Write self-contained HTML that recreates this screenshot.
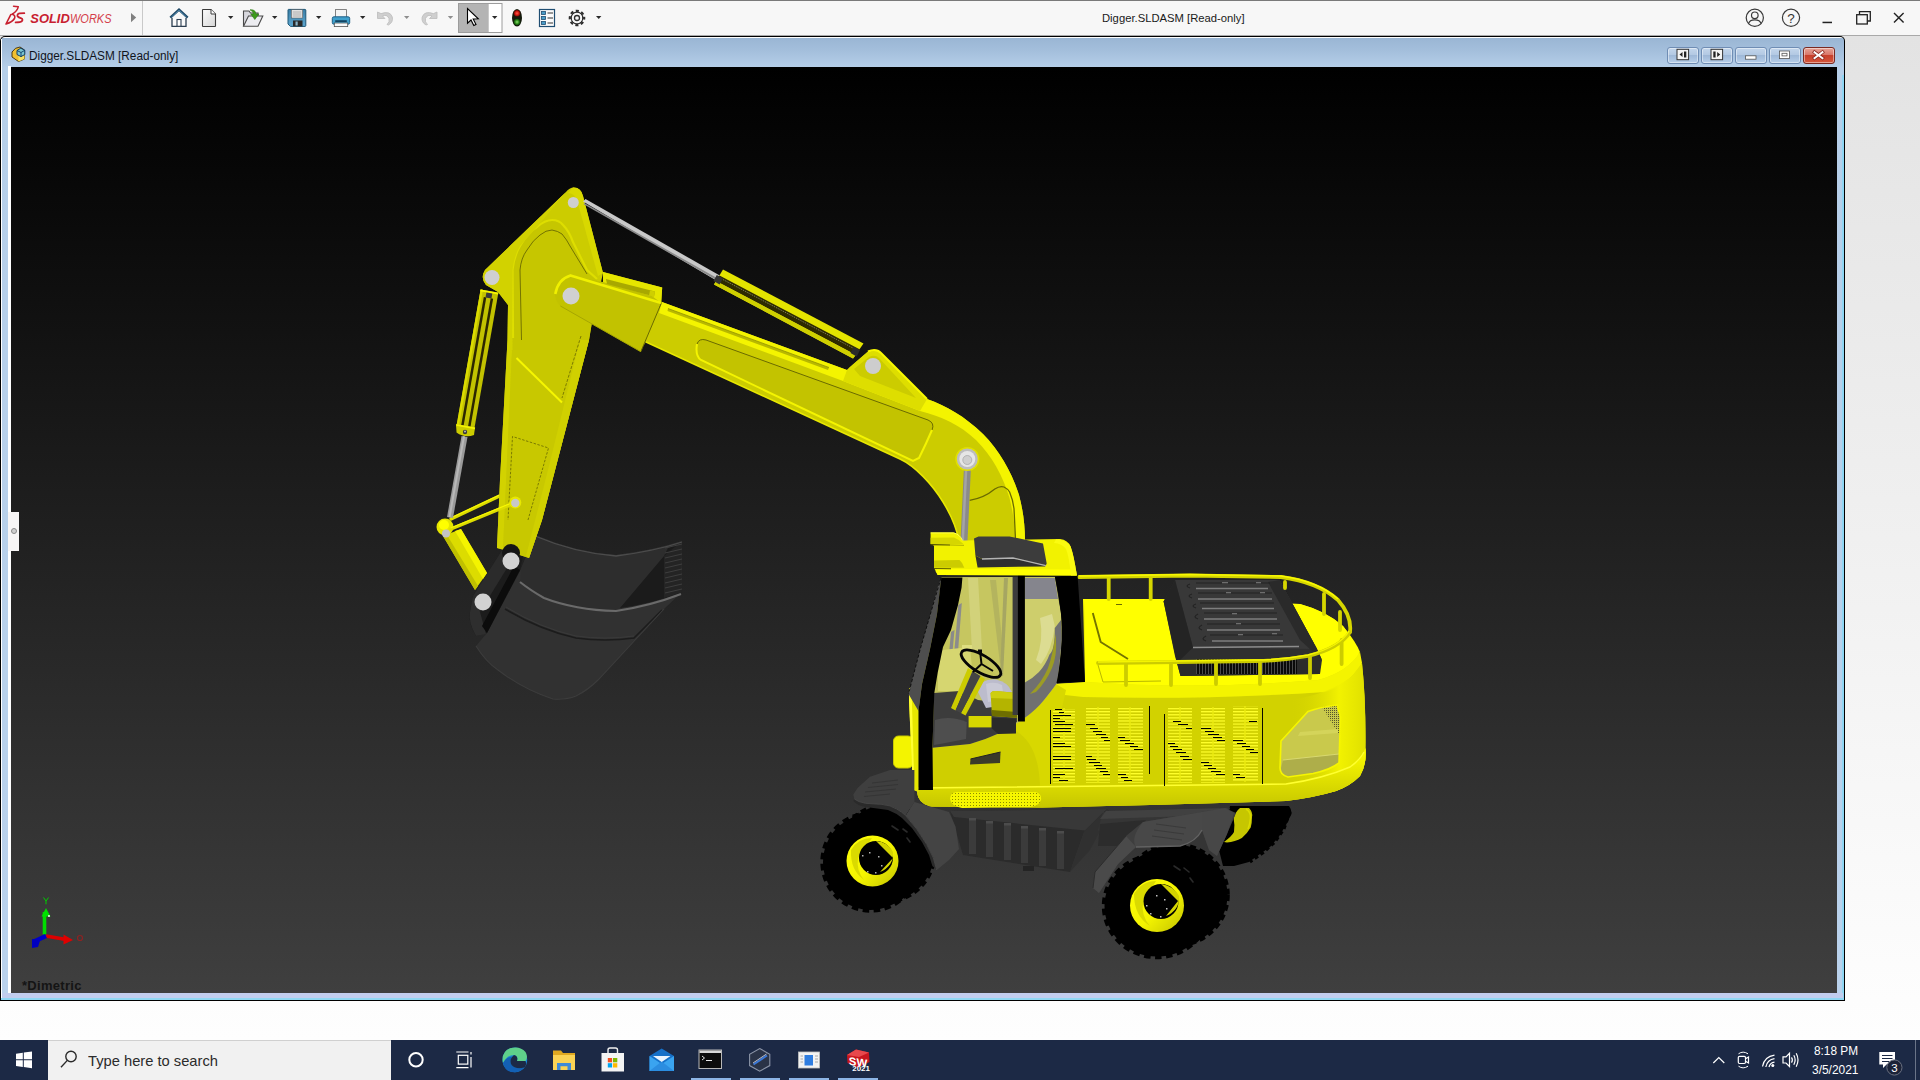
<!DOCTYPE html>
<html>
<head>
<meta charset="utf-8">
<title>Digger.SLDASM</title>
<style>
*{margin:0;padding:0;box-sizing:border-box}
html,body{width:1920px;height:1080px;overflow:hidden;background:#fdfdfd;font-family:"Liberation Sans",sans-serif}
#root{position:relative;width:1920px;height:1080px;overflow:hidden;background:#fdfdfd}
#swbg{position:absolute;left:0;top:36px;width:1920px;height:1004px;background:linear-gradient(#e3e3e3 0,#f0f0f0 50%,#fdfdfd 96%,#fefefe 100%)}
#topbar{position:absolute;left:0;top:0;width:1920px;height:36px;background:#f7f7f7;border-top:1px solid #7a7a7a}
#topsep{position:absolute;left:142px;top:1px;width:1px;height:34px;background:#c9c9c9}
#topline{position:absolute;left:0;top:35px;width:1920px;height:1px;background:#a9a9a9}
#apptitle{position:absolute;left:1101.5px;top:11px;font-size:11.5px;transform:scaleX(.978);line-height:15px;color:#1a1a1a;white-space:nowrap;transform-origin:0 50%}
#mdi{position:absolute;left:0;top:36px;width:1845px;height:965px;background:#000;border-radius:5px 5px 0 0}
#mdi-in{position:absolute;left:1px;top:1px;right:1px;bottom:1px;border-radius:4px 4px 0 0;background:linear-gradient(#fff 0,#fff 1px,#9ab6d4 1px,#a4bfdc 14px,#b6cfe9 31px,#bad2ec 100%)}
#mdi-in:before{content:"";position:absolute;left:0;top:2px;bottom:0;width:1px;background:#fff}
#mdi-in:after{content:"";position:absolute;left:0;right:0;bottom:0;height:2px;background:#8fd6f3}
#mdi-r{position:absolute;right:1px;top:39px;bottom:1px;width:2px;background:#8fd6f3}
#vpframe{position:absolute;left:8px;top:66px;width:3px;height:927px;background:#fff}
#botband{position:absolute;left:2px;top:993px;width:1841px;height:5px;background:#c2cdee}
#viewport{position:absolute;left:11px;top:67px;width:1826px;height:926px;background:linear-gradient(#000 0,#3f3f3f 100%)}
#mdititle{position:absolute;left:28.8px;top:48.6px;font-size:12px;transform:scaleX(.982);line-height:15px;color:#10141c;white-space:nowrap;transform-origin:0 50%}
.wb{position:absolute;top:46.6px;width:32px;height:17px;border:1px solid #6f8db4;border-radius:3px;background:linear-gradient(#c3d6ec 0,#b3c9e3 45%,#9fb9d8 50%,#b7cfea 100%);box-shadow:inset 0 0 0 1px rgba(255,255,255,.45)}
.wb.cl{border-color:#7a2a22;background:linear-gradient(#e6a497 0,#d9776a 45%,#c8402c 50%,#d4573c 100%)}
#handle{position:absolute;left:8px;top:512px;width:11px;height:39px;background:#f7f5f5}
#handle i{position:absolute;left:3px;top:16px;width:6px;height:6px;border:1px solid #8a8a8a;border-radius:50%;background:#cfcfcf}
#dimetric{position:absolute;left:22px;top:977.8px;font-size:13px;font-weight:bold;color:#141414;letter-spacing:.3px;line-height:15px}
#gap{display:none}
#taskbar{position:absolute;left:0;top:1040px;width:1920px;height:40px;background:#1c2945}
#search{position:absolute;left:48px;top:0;width:343px;height:40px;background:#f1f1f1;border-top:1px solid #d0d0d0}
#search span{position:absolute;left:40px;top:11px;font-size:15px;transform:scaleX(.98);color:#2b2b2b;white-space:nowrap;line-height:18px;transform-origin:0 50%}
.ul{position:absolute;top:38px;height:2px;background:#8db5e6}
.tray{position:absolute;color:#fff;font-size:12px;line-height:14px;white-space:nowrap;transform-origin:0 50%}
svg{position:absolute;left:0;top:0;overflow:visible}
</style>
</head>
<body>
<div id="root">
<div id="swbg"></div>
<div id="topbar"></div>
<div id="topsep"></div>
<div id="topline"></div>
<div id="apptitle">Digger.SLDASM [Read-only]</div>

<div id="mdi"><div id="mdi-in"></div><div id="mdi-r"></div></div>
<div id="vpframe"></div><div id="botband"></div>
<div id="viewport"></div>
<div id="mdititle">Digger.SLDASM [Read-only]</div>
<div class="wb" style="left:1667px"></div>
<div class="wb" style="left:1701px"></div>
<div class="wb" style="left:1735px"></div>
<div class="wb" style="left:1769px"></div>
<div class="wb cl" style="left:1803px"></div>
<div id="handle"><i></i></div>
<div id="dimetric">*Dimetric</div>

<div id="gap"></div>
<div id="taskbar">
<div id="search"><span>Type here to search</span></div>
<div class="ul" style="left:691px;width:40px"></div>
<div class="ul" style="left:740px;width:40px"></div>
<div class="ul" style="left:789px;width:40px"></div>
<div class="ul" style="left:838px;width:40px"></div>
</div>
<div class="tray" id="time" style="left:1814px;top:1044.3px;transform:scaleX(.985)">8:18 PM</div>
<div class="tray" id="date" style="left:1811.5px;top:1062.5px;transform:scaleX(.995)">3/5/2021</div>

<svg width="1920" height="1080" viewBox="0 0 1920 1080" shape-rendering="auto">
<defs>
<clipPath id="vp"><rect x="11" y="67" width="1826" height="926"/></clipPath>
<linearGradient id="gRim" x1="0" y1="0" x2="1" y2="1"><stop offset="0" stop-color="#ffff0a"/><stop offset=".55" stop-color="#f4f400"/><stop offset="1" stop-color="#c2c200"/></linearGradient>
<linearGradient id="gBoom" x1="0" y1="0" x2="0" y2="1"><stop offset="0" stop-color="#dede00"/><stop offset="1" stop-color="#cfcf00"/></linearGradient>
<linearGradient id="gSide" x1="0" y1="0" x2="0" y2="1"><stop offset="0" stop-color="#ffff00"/><stop offset=".18" stop-color="#ecec00"/><stop offset=".35" stop-color="#dcdc00"/><stop offset="1" stop-color="#d6d600"/></linearGradient>
<linearGradient id="gSill" x1="0" y1="0" x2="0" y2="1"><stop offset="0" stop-color="#ffff00"/><stop offset=".35" stop-color="#eaea00"/><stop offset="1" stop-color="#c6c600"/></linearGradient>
<linearGradient id="gRear" x1="0" y1="0" x2="1" y2="0"><stop offset="0" stop-color="#d2d200" stop-opacity="0"/><stop offset=".65" stop-color="#f2f200"/><stop offset="1" stop-color="#e0e000"/></linearGradient>
<linearGradient id="gGlass" x1="0" y1="0" x2="1" y2="0"><stop offset="0" stop-color="#b9b950"/><stop offset=".5" stop-color="#b4b44a"/><stop offset="1" stop-color="#a6a64e"/></linearGradient>
<linearGradient id="gRod" x1="0" y1="0" x2="0" y2="1"><stop offset="0" stop-color="#d6d6d6"/><stop offset="1" stop-color="#8e8e8e"/></linearGradient>
<pattern id="pSlat" x="0" y="708" width="4" height="3.1" patternUnits="userSpaceOnUse"><rect width="4" height="3.1" fill="#d0d000"/><rect width="4" height="1.2" fill="#ffff2a"/></pattern>
<pattern id="pVent" x="1196" y="0" width="3" height="4" patternUnits="userSpaceOnUse"><rect width="3" height="4" fill="#0a0a0a"/><rect width="1" height="4" fill="#4a4a4a"/></pattern>
<pattern id="pDots" x="0" y="0" width="3" height="3" patternUnits="userSpaceOnUse"><rect width="3" height="3" fill="#f6f600"/><rect width="1" height="1" x="1" y="1" fill="#8c8c00"/></pattern>
<pattern id="pHatch" x="0" y="0" width="2" height="2" patternUnits="userSpaceOnUse"><rect width="2" height="2" fill="#c8c84a"/><rect width="1" height="1" fill="#55552a"/></pattern>
</defs>
<g clip-path="url(#vp)">
<!-- ===== bucket ===== -->
<g id="bucket">
<!-- outer shell -->
<path d="M476,646 Q486,662 498,670 Q524,690 553,699 Q566,700 576,696 Q588,690 598,680 L637,638 L664,609 L681,593 L682,541 Q655,550 616,555 Q575,552 535,535 L521,569 L487,633Z" fill="#313131"/>
<!-- inside back wall -->
<path d="M535,535 Q575,552 616,555 Q655,550 682,541 L681,593 Q650,606 616,611 Q575,610 544,598 Q530,590 520,582 L521,569Z" fill="#2d2d2d"/>
<path d="M620,608 L664,556 L668,548 L681,543 L681,593 Q650,604 620,608Z" fill="#1b1b1b"/>
<path d="M664,556 L682,541 L681,593 L664,598Z" fill="#242424"/>
<g stroke="#3e3e3e" stroke-width="1"><path d="M665,548 L682,544 M665,553 L682,549 M665,558 L682,554 M665,563 L682,559 M665,568 L682,564 M665,573 L682,569 M665,578 L682,574 M665,583 L682,579 M665,588 L682,584 M665,593 L682,589"/></g>
<!-- rim highlight -->
<path d="M520,582 Q530,590 544,598 Q575,610 616,611 Q650,606 681,594" fill="none" stroke="#6a6a6a" stroke-width="2.1"/>
<path d="M535,536 Q575,553 616,556 Q655,551 682,542" fill="none" stroke="#4c4c4c" stroke-width="1.3"/>
<!-- band -->
<path d="M505,609 Q540,630 576,638 Q605,642 634,638 L662,610" fill="none" stroke="#1c1c1c" stroke-width="1.6"/>
<path d="M506,607 Q540,628 576,636 Q605,640 634,636" fill="none" stroke="#3a3a3a" stroke-width="1"/>
<path d="M476,646 Q486,662 498,670 Q524,690 553,699 Q566,700 576,696 Q588,690 598,680 L637,638 L664,609" fill="none" stroke="#3c3c3c" stroke-width="1.1"/>
<!-- bracket -->
<path d="M504,547 Q509,542 516,544 Q524,548 523,556 L520,570 L487,633 L476,636 Q468,622 470,612 L473,596Z" fill="#1c1c1c"/>
<path d="M504,547 L512,560 L480,612 L473,596Z" fill="#2b2b2b"/>
<path d="M473,596 L480,612 L486,634 L476,636 Q468,622 470,612Z" fill="#2e2e2e"/>
<path d="M520,570 L487,633 L482,626 L514,566Z" fill="#0c0c0c"/>
</g>
<!-- ===== linkage ===== -->
<g id="link">
<path d="M443,536 L461,529 L487,573 L475,590Z" fill="#dcdc00"/>
<path d="M455,531 L461,529 L487,573 L483,579Z" fill="#f4f400"/>
<path d="M443,536 L447,535 L478,586 L475,590Z" fill="#c0c000"/>
<path d="M451,519 L499.5,496" stroke="#dcdc00" stroke-width="3.4" stroke-linecap="round"/>
<path d="M450.6,518 L499,495.2" stroke="#f8f800" stroke-width="1.1"/>
<circle cx="445" cy="527" r="8.5" fill="#e6e600"/>
<circle cx="444" cy="525" r="5" fill="#ffff00"/>
<circle cx="446" cy="533.5" r="4" fill="#c4c4c4"/>
</g>
<!-- ===== stick ===== -->
<g id="stick">
<path d="M573,187.5 Q581,187 583,196 L603,273 L592,322 L589,340 L542,520 L529,558 L497,548 L500,480 L507.5,340 L508,305 L498,292 L486,285 Q480,278 485,270 L566,192 Q569,188 573,187.5Z" fill="#cccc00"/>
<!-- right side highlight of upper flange -->
<path d="M573,187.5 Q581,187 583,196 L603,273 L598,276 L577,200 Q574,193 568,193Z" fill="#d8d800"/>
<!-- inner raised panel -->
<path d="M513,350 L512.5,270 Q514,256 520,246 Q528,232 537,227 Q545,220 552,220 Q559,220 563,225 Q569,231 573,242 L587,270 L597,279 L592,322 L589,340 L582,350Z" fill="#c6c600"/>
<path d="M513,338 L512.5,270 Q514,256 520,246 Q528,232 537,227 Q545,220 552,220 Q559,220 563,225 Q569,231 573,242 L587,270 L597,279" fill="none" stroke="#dede00" stroke-width="2.2"/>
<path d="M521.5,340 L520,270 Q521,258 527,250 Q533,240 540,235 Q546,230 552,230 Q558,231 562,234 Q567,240 570,246 L587,274" fill="none" stroke="#5e5e00" stroke-width=".8"/>
<!-- left flange lighter -->
<path d="M486,285 L498,292 L508,305 L507.5,340 L500,480 L497,548 L503,549 L512,350 L512.5,270 Q514,256 520,246 L537,227 L566,192 L485,270 Q480,278 486,285Z" fill="#d2d200"/>
<!-- lower face -->
<path d="M512,350 L582,350 L589,340 L542,520 L529,558 L503,549Z" fill="#c8c800"/>
<path d="M580,340 L589,340 L542,520 L529,558 L526,556 L548,470Z" fill="#d0d000"/>
<path d="M516.5,358 L562,402.5" stroke="#f6f600" stroke-width="2"/>
<path d="M581,336 L562,398" stroke="#5a5a00" stroke-width=".7" stroke-dasharray="3 1.5"/>
<path d="M528,520 L548.5,448 L512.5,436.5 L508,520" fill="none" stroke="#5a5a00" stroke-width=".7" stroke-dasharray="2.5 1.5"/>
<!-- pins -->
<circle cx="573.3" cy="202.5" r="5.5" fill="#cfcfcf"/>
<circle cx="492" cy="277.5" r="7.5" fill="#cfcfcf"/>
<path d="M451,529 L513,503.500" stroke="#dcdc00" stroke-width="3.400" stroke-linecap="round"/>
<path d="M450.600,528 L512.600,502.600" stroke="#f8f800" stroke-width="1.100"/>
<circle cx="515.3" cy="502.6" r="6" fill="#e8e800"/>
<circle cx="515.3" cy="503" r="4.2" fill="#c8c8c8"/>
</g>
<!-- bucket pins (over stick) -->
<circle cx="511" cy="553" r="9" fill="#151515"/>
<circle cx="511" cy="561" r="8.5" fill="#d2d2d2"/>
<circle cx="483" cy="602" r="8.5" fill="#d2d2d2"/>
<!-- ===== bucket cylinder (left) ===== -->
<g id="cylL">
<path d="M461.5,436 L467.5,437 L453,518 L447,517Z" fill="#9a9a9a"/>
<path d="M463,436 L465,436.5 L450.5,517.5 L448.500,517Z" fill="#b8b8b8"/>
<path d="M480.600,289.400 L498.400,292.600 L474.200,429.600 L456.400,426.400Z" fill="#c2c200"/>
<path d="M480.600,289.400 L483,289.800 L458.800,426.800 L456.400,426.400Z" fill="#dcdc00"/>
<path d="M485.050,297.300 L462.050,427.400" stroke="#2c2700" stroke-width="2.500"/>
<path d="M491.900,298.500 L468.900,428.650" stroke="#2c2700" stroke-width="2.500"/>
<path d="M480.400,290.400 L498.200,293.600" stroke="#f6f600" stroke-width="1.800"/>
<path d="M456,424 L475,427.500 L474,435 Q465,438.500 456.500,432.500Z" fill="#cccc00"/>
<path d="M456.400,425 L475,428.400" stroke="#f4f400" stroke-width="1.600"/>
<circle cx="465" cy="432" r="2.200" fill="#3a3a3a"/><circle cx="465" cy="431.600" r="1" fill="#bbb"/>
<rect x="486" y="293" width="6" height="5" fill="#3a3a3a" transform="rotate(10 489 295)"/>
</g>
<!-- ===== boom ===== -->
<g id="boom">
<path d="M659,308 L662,302 L847,370 L850,367 L868,351.500 Q876,348 881,353 L927,399 C947,406 964,416 983,434 C1000,451 1012,473 1019,495 C1023,510 1025,525 1025,541 L959,541 C957,530 951,515 943,502 C932,484 915,466 900,459 L646,342 L640,350 L620,340 Z" fill="#cccc00"/>
<!-- top flange face -->
<path d="M662,302 L847,370 L927,399 C947,406 964,416 983,434 C1000,451 1012,473 1019,495 C1023,510 1025,525 1025,541 L1015.500,541 C1015,526 1013,512 1009.500,498 C1003,476 992,456 976,440 C959,424 942,417 920,411 L843,381 L659,313Z" fill="#f4f400"/>
<path d="M668,308.5 L829,367.5 L828,370 L667.5,311Z" fill="#b8b800"/>
<path d="M668,308.5 L829,367.5" stroke="#8a8a00" stroke-width=".7"/>
<!-- bracket -->
<path d="M847,370 L850,367 L868,351.5 Q876,348 881,353 L927,399 L920,411 L843,381Z" fill="#dede00"/>
<path d="M854,369 L869,357 Q875,354 879,358 L916,398 L860,376Z" fill="#cccc00"/>
<path d="M868,351.5 Q876,348 881,353 L927,399" fill="none" stroke="#f8f800" stroke-width="2"/>
<!-- recess panel -->
<path d="M697,344 Q699,338 706,340 L928,420 Q935,423 932,430 Q926,444 919,458 L913,461 L701,360 Q695,356 697,344Z" fill="#c3c300"/>
<path d="M697,344 Q699,338 706,340 L928,420 Q935,423 932,430" fill="none" stroke="#6a6a00" stroke-width="1"/>
<path d="M932,430 Q926,444 919,458 L913,461 L701,360 Q695,356 697,344" fill="none" stroke="#f4f400" stroke-width="2"/>
<!-- lower edge highlight -->
<path d="M646,342 L900,459 C915,466 932,484 943,502 C951,515 957,530 959,541" fill="none" stroke="#e8e800" stroke-width="1.500"/>
<!-- foot recess lines -->
<path d="M969.600,500.400 Q984,498 994.800,489 Q1000,485.500 1004,487 Q1008,489 1009.600,492 Q1013,500 1014,508.500 L1015.600,541" fill="none" stroke="#6a6a00" stroke-width="1.300"/>
<!-- yoke -->
<path d="M603,272 L662.200,287.600 L661.200,303 L640.800,351.700 L560.400,306 Q554,299 555.300,293 Q558,279 570.500,275.400 L603,282Z" fill="#c2c200"/>
<path d="M603,272 L662.200,287.600 L661.200,303 L652,296 L603,282Z" fill="#e6e600"/>
<path d="M606,279 L655,291.500 L654,296.500 L607,284Z" fill="#a8a800"/>
<path d="M650,290.500 L655,291.500 L654,296.500 L649,295.500Z" fill="#cfcf00"/>
<path d="M555.300,294 Q558,279 570.500,275.400 L661.200,303" fill="none" stroke="#f0f000" stroke-width="2.600" stroke-linejoin="round"/>
<path d="M661.200,303.500 L640.800,351.700" fill="none" stroke="#6a6a00" stroke-width="1"/>
<path d="M560.400,306 L640.800,351.700" fill="none" stroke="#a6a600" stroke-width="1"/>
<circle cx="571" cy="296" r="8.5" fill="#d0d0d0"/>
<circle cx="873" cy="366" r="8" fill="#cdcdcd"/>
</g>
<!-- ===== stick cylinder (on boom) ===== -->
<g id="cylT">
<path d="M583,201.5 L585.5,199 L721.5,276.5 L718,281.5Z" fill="#c9c9c9"/>
<path d="M583.6,204.2 L584.4,203 L719.6,279.6 L718.6,281.2Z" fill="#8a8a8a"/>
<path d="M723,269.5 L863.5,343.5 L853,358.5 L714,284.5Z" fill="#e4e400"/>
<path d="M719.5,275.5 L860,349.5 L856,355 L716,281Z" fill="#2e2a00"/>
<path d="M718.5,277.2 L859,351.2" stroke="#8a8a6a" stroke-width=".8" stroke-dasharray="1.5 1"/>
<path d="M716,281 L856,355 L853,358.5 L714,284.5Z" fill="#cfcf00"/>
<rect x="715" y="276" width="7" height="7" fill="#333" transform="rotate(28 718 279)"/>
<rect x="852" y="348" width="7" height="7" fill="#2a2a2a" transform="rotate(28 855 351)"/>
</g>
<!-- ===== boom lift cylinder ===== -->
<g id="cylB">
<path d="M964,466 L971,466 L967.500,541 L960.500,541Z" fill="#8a8a8a"/>
<path d="M965,466 L967.500,466 L964,541 L961.500,541Z" fill="#a4a4a4"/>
<circle cx="967.3" cy="459" r="12" fill="#e0e000"/>
<circle cx="967.3" cy="459" r="10.5" fill="#bdbdbd"/>
<circle cx="967.3" cy="459" r="8" fill="#e6e6e6"/>
<circle cx="967.3" cy="460" r="4.5" fill="#cfcfcf" stroke="#aaa" stroke-width=".8"/>
</g>
<!-- ===== body ===== -->
<g id="body">
<!-- main body silhouette (side + deck) -->
<path d="M1083,599 L1165,599 L1300,604 Q1326,611 1343,626 Q1356,642 1361,660 Q1366,700 1365.5,748 Q1367,764 1360,776 Q1350,786 1336,791 Q1312,798 1286,801 L1150,805 L1042,807.5 L930,806.5 Q918,803 917,792 L916,700 L934,747 Q975,742 1010,728 Q1035,712 1056,684 L1085,682Z" fill="url(#gSide)"/>
<!-- side face (below shoulder) -->
<path d="M1083,697 Q1200,700 1325,692 Q1350,684 1362,663 Q1366,700 1365.5,748 Q1367,764 1360,776 Q1350,786 1336,791 Q1312,798 1286,801 L1150,805 L1042,807.5 L930,806.5 Q918,803 917,792 L916,740 L934,747 Q975,742 1010,728 Q1035,712 1056,684Z" fill="#d2d200"/>
<!-- shoulder roll highlight -->
<path d="M1056,684 L1085,682 Q1200,690 1318,680 Q1348,672 1360,652 L1362,663 Q1350,684 1325,692 Q1200,700 1083,697 Q1066,696 1050,692Z" fill="#f4f400"/>
<!-- rear rounded corner lighter -->
<path d="M1290,700 Q1330,694 1352,676 L1362,663 Q1366,700 1365,750 Q1367,764 1360,776 Q1350,786 1336,791 Q1312,798 1290,800Z" fill="url(#gRear)"/>
<!-- deck top -->
<path d="M1085,599 L1165,599 L1300,604 Q1326,611 1343,626 Q1356,642 1360,652 Q1348,672 1318,680 Q1200,690 1085,682Z" fill="#ffff00"/>
<!-- door / cab lower panel -->
<path d="M932,749 Q975,742 1010,728 Q1035,712 1056,684 L1060,700 L1050,790 L932,790Z" fill="#cfcf00"/>
<path d="M1010,728 Q1035,712 1056,684 L1066,690 Q1050,760 1052,790 L1040,790 Q1040,740 1010,728Z" fill="#d8d800"/>
<!-- sill -->
<path d="M917,787 L1286,783 Q1322,778 1350,766 Q1362,758 1365.5,748 Q1367,764 1360,776 Q1350,786 1336,791 Q1312,798 1286,801 L1150,805 L1042,807.5 L930,806.5 Q918,803 917,792Z" fill="url(#gSill)"/>
<path d="M917,788 L1286,784 Q1322,779 1350,767 Q1360,760 1364,752" fill="none" stroke="#ffff30" stroke-width="1.5"/>
<!-- step plate -->
<path d="M956,792 L1036,792 Q1042,794 1041,800 Q1039,806 1030,807 L962,808 Q951,806 950,799 Q950,793 956,792Z" fill="url(#pDots)"/>
<!-- grilles -->
<g>
<rect x="1053" y="709" width="22" height="74" fill="url(#pSlat)"/>
<rect x="1086" y="707" width="24" height="76" fill="url(#pSlat)"/>
<rect x="1118" y="707" width="25" height="76" fill="url(#pSlat)"/>
<rect x="1168" y="707" width="24" height="76" fill="url(#pSlat)"/>
<rect x="1201" y="707" width="24" height="76" fill="url(#pSlat)"/>
<rect x="1233" y="706" width="25" height="76" fill="url(#pSlat)"/>
<g stroke="#ecec10" stroke-width="1.4"><path d="M1064,708 V783 M1098,707 V783 M1130,707 V783 M1180,707 V783 M1213,707 V783 M1245,706 V782"/></g>
<g stroke="#0a0a00" stroke-width="1"><path d="M1050.500,710 V784 M1149.500,706 V774 M1164.500,714 V786 M1262.500,708 V784"/></g>
<g stroke="#000" stroke-width="1.7" shape-rendering="crispEdges">
<path d="M1055.0,709.5 H1062.0 M1059.0,712.5 H1064.0 M1053.0,715.5 H1071.0 M1053.0,718.5 H1060.0 M1053.0,721.5 H1065.0 M1055.0,724.5 H1073.0 M1053.0,728.5 H1071.0 M1053.0,731.5 H1071.0 M1053.0,737.5 H1060.0 M1053.0,743.5 H1065.0 M1053.0,746.5 H1071.0 M1053.0,756.5 H1071.0 M1053.0,759.5 H1071.0 M1055.0,768.5 H1073.0 M1053.0,774.5 H1065.0 M1053.0,777.5 H1060.0 M1059.0,780.5 H1068.0 M1086.3,724.5 H1095.3 M1090.0,728.5 H1098.4 M1093.3,731.5 H1102.1 M1096.4,734.5 H1105.8 M1100.9,737.5 H1108.2 M1103.5,740.5 H1110.0 M1086.0,756.5 H1092.3 M1087.4,759.5 H1095.8 M1089.3,762.5 H1100.1 M1093.5,765.5 H1102.1 M1095.5,768.5 H1106.3 M1100.3,771.5 H1107.7 M1102.5,774.5 H1110.0 M1118.0,737.5 H1125.4 M1119.7,740.5 H1130.0 M1125.2,743.5 H1133.6 M1129.8,746.5 H1138.2 M1134.0,749.5 H1143.0 M1118.0,774.5 H1126.4 M1121.1,777.5 H1128.4 M1124.4,780.5 H1131.8 M1172.8,721.5 H1180.8 M1178.1,724.5 H1187.9 M1185.6,728.5 H1192.0 M1168.0,743.5 H1175.2 M1169.8,746.5 H1178.0 M1172.9,749.5 H1182.2 M1176.3,752.5 H1186.0 M1180.4,756.5 H1189.1 M1183.4,759.5 H1192.0 M1201.0,728.5 H1210.6 M1205.2,731.5 H1213.6 M1208.0,734.5 H1218.8 M1213.2,737.5 H1221.6 M1216.7,740.5 H1225.0 M1201.0,762.5 H1208.7 M1204.3,765.5 H1212.1 M1208.1,768.5 H1216.3 M1211.3,771.5 H1221.2 M1216.0,774.5 H1224.5 M1233.0,740.5 H1243.2 M1237.4,743.5 H1246.4 M1242.1,746.5 H1249.7 M1245.6,749.5 H1254.2 M1249.9,752.5 H1258.0 M1233.0,774.5 H1240.4 M1236.1,777.5 H1244.9 M1249.0,721.5 H1257.0"/>
</g>
</g>
<!-- right window -->
<path d="M1281,741 L1308,711.5 Q1320,707 1337,705 L1340.500,717 L1339,763 Q1330,770 1313,773.5 L1288,777 Q1280,775 1280,768Z" fill="#c9c94c"/>
<path d="M1283,760 L1339,754 L1339,763 Q1330,770 1313,773.5 L1288,777 Q1281,775 1281,768Z" fill="#aeae4a"/>
<path d="M1283,760 L1339,754" stroke="#d8d870" stroke-width="1.2"/>
<path d="M1322,707 L1337,705 L1340.500,717 L1340,736 Z" fill="url(#pHatch)"/>
<path d="M1300,732 L1338,729 L1338,733 L1298,736Z" fill="#d4d45a"/>
<path d="M1281,741 L1308,711.5 Q1320,707 1337,705 L1340.500,717 L1339,763 Q1330,770 1313,773.5 L1288,777 Q1280,775 1280,768Z" fill="none" stroke="#f6f600" stroke-width="1.6"/>
<!-- door handle -->
<path d="M970.500,759 L1000.500,752 L1000,763 L970,764.500Z" fill="#3a3a2a"/>
<path d="M970.500,759 L1000.500,752" stroke="#222" stroke-width="1"/>
<!-- front light -->
<rect x="893.500" y="736" width="19.500" height="32" rx="5" fill="#f4f400"/>
<rect x="893.500" y="736" width="19.500" height="32" rx="5" fill="none" stroke="#c8c800" stroke-width="1"/>
<!-- front yellow edge strip -->
<path d="M909.500,688 L921,686 L918.500,711 L918.500,792 L913,790 L909,700Z" fill="#e6e600"/>
<path d="M909.500,688 L911.500,688 L914.500,790 L913,790 L909,700Z" fill="#ffff30"/>
<!-- deck crease lines -->
<path d="M1092.800,613 L1100.700,642 L1128,659" fill="none" stroke="#747400" stroke-width="1.9" stroke-linejoin="round"/>
<path d="M1116,604.500 h6" stroke="#6a6a00" stroke-width="1"/>
<path d="M1098,665 L1103,682 L1161,681" fill="none" stroke="#b8b800" stroke-width="1"/>
<!-- engine cover -->
<path d="M1175,580 L1279.600,580 L1317,649 L1322,660 L1320,674 L1180.500,676 L1175,656 L1163.600,601.500Z" fill="#2f2f2f"/>
<path d="M1175,580 L1279.600,580 L1317,649 L1193,647.500Z" fill="#383838"/>
<path d="M1175,580 L1193,647.500 L1177,663 L1163.600,601.500Z" fill="#242424"/>
<path d="M1279.600,580 L1317,649 L1322,660 L1300,640 L1268,582Z" fill="#2a2a2a"/>
<path d="M1177,663 L1320,660 L1320,674 L1180.500,676Z" fill="#2b2b2b"/>
<rect x="1196" y="659" width="101" height="15" fill="url(#pVent)"/>
<path d="M1193,647.500 L1299,646.500" stroke="#8c8c8c" stroke-width="1.6"/>
<g stroke="#7e7e7e" stroke-width="1.3" fill="none">
<path d="M1196,588.500 H1268 M1198,599 H1272 M1202,608.500 H1274 M1204,619 H1277 M1207,630 H1280 M1212,641 H1283"/>
</g>
<g stroke="#232323" stroke-width="1.2" fill="none">
<path d="M1190,584 Q1184,586 1190,588 M1192,594 Q1186,596 1192,598 M1196,604 Q1190,606 1196,608 M1198,614 Q1192,617 1198,619 M1202,625 Q1196,628 1202,630 M1206,636 Q1200,639 1206,641"/>
<path d="M1196,583 H1270 M1198,593 H1272 M1200,603 H1274 M1204,613 H1277 M1207,624 H1280 M1210,635 H1283"/>
</g>
<g fill="#6e6e6e"><rect x="1222" y="582" width="6" height="1.300"/><rect x="1256" y="582" width="5" height="1.300"/><rect x="1226" y="592" width="5" height="1.300"/><rect x="1260" y="592" width="5" height="1.300"/><rect x="1232" y="613" width="5" height="1.300"/><rect x="1236" y="623" width="5" height="1.300"/><rect x="1238" y="634" width="5" height="1.300"/><rect x="1272" y="633" width="5" height="1.300"/></g>
<!-- railing -->
<g fill="none" stroke="#d6d600" stroke-width="3.800" stroke-linecap="round">
<path d="M1079,577 L1190,575.500 L1281,577 Q1318,582 1338,600 Q1352,616 1350,632"/>
<path d="M1108.700,578 V599 M1150.700,577 V599 M1285,582 V588 M1324,594 V614 M1340,612 V630"/>
</g>
<path d="M1079,576 L1190,574.500 L1281,576 Q1318,581 1338,599" fill="none" stroke="#f8f800" stroke-width="1.500"/>
<g fill="none" stroke="#cccc00" stroke-width="3.800" stroke-linecap="round">
<path d="M1350,632 Q1340,648 1308,656 Q1280,661 1255,661 L1098,663"/>
<path d="M1126,664 V685 M1171,663 V685 M1216,662 V684 M1260,661 V684 M1310,657 V678 M1341.600,640 V664"/>
</g>
<path d="M1349,631 Q1340,647 1308,655 Q1280,660 1255,660 L1098,662" fill="none" stroke="#f4f400" stroke-width="1.500"/>
</g>
<!-- ===== cab ===== -->
<g id="cab">
<!-- glass interior -->
<path d="M941.7,577 L1055,577 L1062,620 L1061,653 L1057,683 Q1048,696 1040.7,703.7 Q1032,712 1023,719.5 Q1010,728 998.5,733.6 Q985,740 970,744 L932.5,747.7 L919,760 L919,700 Q921,662 930,620Z" fill="#c4c45a"/>
<!-- windshield gray (left of pillar) -->
<path d="M941.5,577.5 L937,614 L930,649 L922,684 L918.5,711 L908.5,694 L920,650 L931,612 L938,586Z" fill="#4e4e4e"/>
<path d="M941,578 L931,612 L920,650 L908.5,694" fill="none" stroke="#0a0a0a" stroke-width=".9" stroke-dasharray="3 2"/>
<!-- front section: bright upper glass -->
<path d="M962,578 L1012.6,578 L1012.6,690 L1000,680 L975,648 L955,648 L948,640Z" fill="#c6c660"/>
<path d="M968,578 L978,578 L982,650 L972,650Z" fill="#d2d27a"/>
<path d="M990,580 L996,580 L1004,660 L1000,664Z" fill="#b4b45e"/>
<path d="M1004,578 L1008,578 L1003,676 L1000,676Z" fill="#a6a662"/>
<!-- gray vertical strips -->
<path d="M958.3,605 L961.8,603 L955.5,684 L951.5,684Z" fill="#8c8c8c"/>
<path d="M951,632 L954.5,630 L949,691 L945.5,691Z" fill="#8a8a8a"/>
<!-- dashboard light -->
<path d="M942,650 L970,647 L972,668 L960,691 L938,691 L938,672Z" fill="#d6d670"/>
<path d="M962,645 L972,645 L972,652 L962,652Z" fill="#dede80"/>
<!-- floor / dark -->
<path d="M934,693 L960,691 L978,700 L1017,705 L1017,722 L998.5,733.6 Q985,740 970,744 L932.5,747.7Z" fill="#3c3c3c"/>
<path d="M935,720 Q950,715 966.800,722 L966,738.900 L940,744 L934,745Z" fill="#4e4e4e"/>
<!-- seat -->
<path d="M977,690 Q982,678 996,679.500 Q1008,682 1012,692 L1012,704 L986,708Z" fill="#bcbccc"/>
<path d="M986,684 Q994,681 1002,685 L1004,700 L988,702Z" fill="#cacad6"/>
<!-- console box -->
<path d="M990.600,693 Q992,690.500 996,691 L1017,693 L1017,717.700 L992,716Z" fill="#b4b400"/>
<path d="M990.600,693 Q992,690.500 996,691 L1017,693 L1017,699 L991,698Z" fill="#cece10"/>
<path d="M991.500,710 L1017,712 L1017,717.700 L992,716Z" fill="#6e6e00"/>
<path d="M991.500,717.700 L1016,718.500 L1016,733.600 L998,734 L991.500,728Z" fill="#2a2a2a"/>
<path d="M968.600,716 L991.500,716 L991.500,727.400 L968.600,727.400Z" fill="#d6d600"/>
<!-- steering column -->
<path d="M968,668 L972.500,671 L955.500,710.500 L951,708Z" fill="#cccc00"/>
<path d="M980.500,676 L985,679 L965.500,715.500 L961,713Z" fill="#cccc00"/>
<path d="M972.500,671 L980.500,676 L961,713 L955.500,710.500Z" fill="#444"/>
<!-- right section -->
<path d="M1024.900,578 L1054.800,578 L1058,599 L1024.900,599Z" fill="#85858d"/>
<path d="M1024.900,599 L1058,599 L1061,614 L1061.800,640 L1059,668.500 L1056.500,682.600 L1024.900,717Z" fill="#cece6c"/>
<path d="M1040,618 L1052,614 L1054.800,626 Q1052,650 1041,664 L1036,660 Q1044,640 1040,618Z" fill="#dcdc92"/>
<path d="M1054.800,628 Q1055,650 1049.500,654.400 Q1046,664 1039,672 Q1032,679 1024.900,682.600 L1024.900,717.700 Q1036,710 1044,700 Q1052,690 1057,683 L1059,668.500 L1061.800,640 L1061,620Z" fill="#707070"/>
<path d="M1056,640 Q1057,656 1052,668 Q1046,682 1036,692 L1030,694 Q1042,682 1048,668 Q1053,654 1055.500,634Z" fill="#9c9c24"/>
<!-- steering wheel -->
<ellipse cx="981" cy="663.700" rx="22.500" ry="8.600" fill="none" stroke="#050505" stroke-width="2.800" transform="rotate(31 981 663.700)"/>
<path d="M980,651 L981.500,664 L973,672 M981.500,664 L993,671" fill="none" stroke="#050505" stroke-width="2"/>
<rect x="978" y="649.500" width="4" height="4" fill="#050505"/>
<!-- pillars -->
<path d="M941.300,577.500 L962.400,577.500 L961.600,587.600 L958,605 L951,630 L943,647 L937.800,672 L934.300,693 L932.500,746 L933,790 L918.500,790 L918.500,710.700 L922,684 L930,649 L937,614Z" fill="#000"/>
<rect x="1012.600" y="577" width="5.400" height="138" fill="#3c3c3c"/>
<rect x="1017.900" y="575" width="7" height="146.500" fill="#000"/>
<path d="M1054.800,576.500 L1077.500,575 L1085,682 L1056.500,683 Q1060,668 1061.800,640 Q1062,626 1061,614 Q1059,594 1054.800,576.500Z" fill="#000"/>
<!-- boom foot visible behind roof is drawn in boom; roof -->
<path d="M930.600,532.400 L953.700,532.400 Q960,534 962.500,540.400 L964.300,540.400 L1060,539 Q1068,540 1070.600,546.600 Q1074,556 1076.800,575.500 L937.700,575 L934,567.800 L934,545.700 L930.600,543.900Z" fill="#f2f200"/>
<path d="M937,569 L1076,569.500 L1076.800,575.500 L937.700,575 L935.500,571Z" fill="#ffff00"/>
<path d="M1056,539.200 Q1067,540 1070.600,546.600 Q1074,556 1076.800,575.500 L1071,575.500 Q1069,556 1066,549 Q1062,543.500 1054,543Z" fill="#fbfb10"/>
<!-- hooks -->
<path d="M930.600,537.800 L954,537.600 Q960,540 963.400,543.900 L930.600,543.900Z" fill="#d6d600"/>
<path d="M930.600,544.700 L950,545 " stroke="#4e4e00" stroke-width="1.200" fill="none"/>
<path d="M950,545 L964,545.300" stroke="#b0b000" stroke-width="1" fill="none"/>
<path d="M934,560.500 L959.500,560 Q963,563 964.300,567.800 L934,567.800Z" fill="#cccc00"/>
<path d="M934,568.500 L951,568.700" stroke="#5a5a00" stroke-width="1.100" fill="none"/>
<path d="M930.600,532.900 L953.700,532.900 Q960,534.500 962.500,540.400" fill="none" stroke="#ffff50" stroke-width="1"/>
<!-- dark roof panel -->
<path d="M974,538.600 L978.500,536.400 L1009.500,536.400 L1043,543.500 L1046.700,563.400 L1045.800,565.600 L1013,558 L982,559 L975.400,555.400Z" fill="#3c3c3c"/>
<path d="M975.400,555.400 L982,559 L1013,558 L1045.800,565.600 L1045,566.500 L1004,567 L977.600,567.400Z" fill="#2f2f2f"/>
<path d="M982,559 L1013,558 L1045.800,565.600" fill="none" stroke="#b4b4b4" stroke-width="1.300"/>
</g>
<!-- ===== undercarriage & wheels ===== -->
<g id="under">
<!-- far rear wheel -->
<path d="M1230,806 L1289,806 Q1292,810 1291.500,814 L1286,825 L1279,836.500 L1270,847 L1260,854 L1249,862 L1234,866 L1223,866 L1219,850 L1224,838Z" fill="#000"/>
<path d="M1290,812 L1284,829 L1275,842 L1264,852 L1250,862" fill="none" stroke="#000" stroke-width="3" stroke-dasharray="4 3"/>
<path d="M1240,808 L1249,808 Q1253,812 1252,817 Q1252,823 1250.700,827.600 Q1247,834 1241.900,838 Q1235,842 1227,842.400 L1224,842 Q1232,836 1234,832 Q1235,825 1233.700,818.700 Q1235,812 1240,808Z" fill="#c6c600"/>
<path d="M1246,809 Q1251,812 1250.500,818 Q1250,824 1248,829" fill="none" stroke="#dcdc00" stroke-width="1.500"/>
<!-- chassis box -->
<path d="M950,811 L1107,809 L1110,812 L1084,832 L1070,872 L963,855Z" fill="#2b2b2b"/>
<path d="M950,811 L1107,809 L1085,830.500 L954,817Z" fill="#383838"/>
<path d="M1085,830.500 L1107,809 L1110,812 L1090,850 L1070,872Z" fill="#303030"/>
<g fill="#3b3b3b">
<rect x="969" y="818" width="7" height="36"/><rect x="986" y="821" width="7" height="36"/><rect x="1004" y="823" width="7" height="37"/><rect x="1021" y="826" width="7" height="37"/><rect x="1039" y="828" width="7" height="38"/><rect x="1057" y="831" width="7" height="38"/>
</g>
<g fill="#4c4c4c"><rect x="969" y="818" width="7" height="2.5"/><rect x="986" y="821" width="7" height="2.5"/><rect x="1004" y="823" width="7" height="2.5"/><rect x="1021" y="826" width="7" height="2.5"/><rect x="1039" y="828" width="7" height="2.5"/><rect x="1057" y="831" width="7" height="2.5"/></g>
<rect x="1023" y="866" width="11" height="5" fill="#242424"/>
<!-- centre frame -->
<path d="M1103,812 L1230,808 L1212,848 L1118,850 L1098,830Z" fill="#353535"/>
<path d="M1106,811 L1228,808 L1222,815 L1100,819Z" fill="#414141"/>
<path d="M1100.800,834.600 L1123.800,834.600 L1123.800,839 L1100.800,839Z" fill="#4a4a4a"/>
<path d="M1100,824 L1146,820 L1128,846 L1098,846Z" fill="#2c2c2c"/>
<!-- front wheel -->
<ellipse cx="870.500" cy="862" rx="47.500" ry="48" fill="#000"/>
<ellipse cx="878.500" cy="857.500" rx="47.500" ry="48" fill="#000"/>
<ellipse cx="886.500" cy="853" rx="47.500" ry="48" fill="#000"/>
<ellipse cx="870.500" cy="862" rx="48" ry="48.500" fill="none" stroke="#000" stroke-width="4.400" stroke-dasharray="6.500 4.500"/>
<ellipse cx="886.500" cy="853" rx="48" ry="48.500" fill="none" stroke="#000" stroke-width="3.600" stroke-dasharray="6 4"/>
<g stroke="#2a2a2a" stroke-width="1.600" stroke-linecap="round"><path d="M892,826 L898,830 M903,829 L907,832 M907,838 L910,842"/></g>
<ellipse cx="872.5" cy="861" rx="26" ry="25.5" fill="url(#gRim)"/>
<path d="M851,850 Q858,838 872,838 L858,858 Q856,870 864,880 Q850,870 851,850Z" fill="#dada00"/>
<circle cx="876" cy="858" r="17" fill="#000"/>
<path d="M876,841 L893,858 L880,872 Q894,866 893,852 Q888,842 876,841Z" fill="#d4d400"/>
<g fill="#b0b0b0"><rect x="869" y="852" width="1.5" height="1.5"/><rect x="878" y="856" width="1.5" height="1.5"/><rect x="881" y="865" width="1.5" height="1.5"/><rect x="862" y="855" width="1.5" height="1.5"/><rect x="867" y="871" width="1.5" height="1.5"/><rect x="875" y="872" width="1.5" height="1.5"/></g>
<!-- front fender -->
<path d="M914.4,802 L949,812 L955.6,826.7 L959,849 L949,860 L936.7,870 L933.3,857.8 L926.7,844.4 L916.7,829 L905.6,815.6Z" fill="#444"/>
<path d="M853.3,794.4 L857.8,787.8 L870,776.7 L890,770 L914.4,770 L914.4,802 L905.6,815.6 Q900,811 896.7,809 Q890,805 882,804.4 L865.6,803.3 Q858,802 854.4,799Z" fill="#3f3f3f"/>
<path d="M854.4,799 Q858,802 865.6,803.3 L882,804.4 Q890,805 896.7,809 Q902,812 905.6,815.6 L916.7,829 L926.7,844.4 L933.3,857.8 L936.7,870 L932.4,866 L929,855 L922,842 L912,828 L902,818 Q896,813 888,810 L866,807 Q858,806 853.3,801Z" fill="#2a2a2a"/>
<path d="M854.4,799 Q858,802 865.6,803.3 L882,804.4 Q890,805 896.7,809 Q902,812 905.6,815.6 L916.7,829 L926.7,844.4 L933.3,857.8 L936.7,870" fill="none" stroke="#484848" stroke-width=".9"/>
<g stroke="#353535" stroke-width="1.1" fill="none"><path d="M872,783 L898,780 M868,787.5 L898,784.5 M865,792 L896,789 M864,796.5 L890,794"/></g>
<!-- rear wheel -->
<ellipse cx="1157" cy="906" rx="52.500" ry="50.500" fill="#000"/>
<ellipse cx="1166" cy="900.500" rx="52.500" ry="50.500" fill="#000"/>
<ellipse cx="1175" cy="895" rx="52.500" ry="50.500" fill="#000"/>
<ellipse cx="1157" cy="906" rx="53" ry="51" fill="none" stroke="#000" stroke-width="4.400" stroke-dasharray="6.500 4.500"/>
<ellipse cx="1175" cy="895" rx="53" ry="51" fill="none" stroke="#000" stroke-width="3.600" stroke-dasharray="6 4"/>
<g stroke="#2a2a2a" stroke-width="1.600" stroke-linecap="round"><path d="M1174,866 L1180,870 M1184,868 L1189,872 M1190,878 L1193,882"/></g>
<ellipse cx="1157" cy="905.5" rx="27" ry="26.5" fill="url(#gRim)"/>
<path d="M1134,894 Q1142,881 1156,881 L1143,902 Q1141,916 1150,926 Q1134,916 1134,894Z" fill="#dada00"/>
<circle cx="1161" cy="901.5" r="17.5" fill="#000"/>
<path d="M1161,884 L1178,901 L1166,916 Q1180,910 1179,896 Q1174,886 1161,884Z" fill="#d4d400"/>
<g fill="#c0c0c0"><rect x="1156" y="895" width="1.5" height="1.5"/><rect x="1164" y="899" width="1.5" height="1.5"/><rect x="1166" y="908" width="1.5" height="1.5"/><rect x="1146" y="905" width="1.5" height="1.5"/><rect x="1150" y="913" width="1.5" height="1.5"/><rect x="1160" y="916" width="1.5" height="1.5"/></g>
<!-- rear fender -->
<path d="M1143,822 L1225,808 L1236,813 L1227,834 L1217,856 L1209,850 L1202,830 Q1196,842 1180,846 L1136,847 L1118,864 L1099,893 L1093,888 L1095,872 L1126,836Z" fill="#3e3e3e"/>
<path d="M1202,812 L1225,808 L1234,813 L1227,834 L1217,856 L1209,850 L1202,830Z" fill="#474747"/>
<path d="M1143,822 L1202,812 L1202,830 Q1196,842 1180,846 L1136,847 Q1130,838 1143,822Z" fill="#484848"/>
<path d="M1136,847 L1180,846 Q1196,842 1202,830" fill="none" stroke="#626262" stroke-width="1.300"/>
<path d="M1126,836 L1136,847 L1118,864 L1099,893 L1093,888 L1095,872Z" fill="#4a4a4a"/>
<path d="M1126,836 L1095,872 L1093,888" fill="none" stroke="#2c2c2c" stroke-width="1"/>
<g stroke="#3a3a3a" stroke-width="1.100"><path d="M1156,824 L1186,828 M1154,830 L1184,834 M1152,836 L1182,840"/></g>
</g>
</g>
</svg>

<svg width="1920" height="1080" viewBox="0 0 1920 1080">
<defs>
<linearGradient id="iDoc" x1="0" y1="0" x2="1" y2="1"><stop offset="0" stop-color="#fdfdfd"/><stop offset="1" stop-color="#d6d6d6"/></linearGradient>
<linearGradient id="iSave" x1="0" y1="0" x2="0" y2="1"><stop offset="0" stop-color="#3a7ea6"/><stop offset="1" stop-color="#5fa8d0"/></linearGradient>
<radialGradient id="iRed" cx=".5" cy=".5" r=".5"><stop offset="0" stop-color="#ff5a4a"/><stop offset=".6" stop-color="#d01810"/><stop offset="1" stop-color="#5a0a06"/></radialGradient>
<radialGradient id="iGrn" cx=".5" cy=".5" r=".5"><stop offset="0" stop-color="#8fe070"/><stop offset=".6" stop-color="#2a8a1a"/><stop offset="1" stop-color="#0c3a08"/></radialGradient>
</defs>
<!-- DS logo -->
<g fill="none" stroke="#c8202f" stroke-linecap="round" stroke-linejoin="round">
<path d="M13.500,6.200 L18.300,6.700 Q17.500,11 12.200,14.200" stroke-width="1.500"/>
<path d="M12.200,14.200 Q15.800,15.200 14.500,18.500 Q12.500,22 6,24 L10.800,14.600" stroke-width="1.600"/>
<path d="M24.300,13.200 L19.500,13.400 Q16.800,14 17.600,16.400 Q18.500,17.600 21.300,18.300 Q23.300,19.400 21.800,21.300 Q20.500,22.400 15.600,22.400" stroke-width="1.800"/>
</g>
<text x="30.300" y="22.900" font-family="Liberation Sans, sans-serif" font-size="12.800" font-weight="bold" font-style="italic" fill="#c8202f" textLength="39.500" lengthAdjust="spacingAndGlyphs">SOLID</text>
<text x="70" y="22.900" font-family="Liberation Sans, sans-serif" font-size="12.800" font-style="italic" fill="#d4404a" textLength="41.500" lengthAdjust="spacingAndGlyphs">WORKS</text>
<path d="M131,13 L136.200,17.600 L131,22.200Z" fill="#808080"/>
<!-- home -->
<g>
<path d="M172,18 L172,26.300 L186,26.300 L186,18" fill="#fafafa" stroke="#2c3e50" stroke-width="1.300"/>
<path d="M170.300,17.600 L179,9.600 L187.700,17.600" fill="none" stroke="#1f4866" stroke-width="2.400" stroke-linejoin="miter"/>
<path d="M171.500,17 L179,10.200 L186.500,17" fill="none" stroke="#4a84a8" stroke-width="1"/>
<rect x="177" y="19.500" width="4" height="6.800" fill="#fff" stroke="#2c3e50" stroke-width="1.100"/>
</g>
<!-- new doc -->
<path d="M203,9.500 L211,9.500 L215.500,14 L215.500,26 Q215.500,26.500 215,26.500 L203,26.500 Q202.500,26.500 202.500,26 L202.500,10 Q202.500,9.500 203,9.500Z" fill="url(#iDoc)" stroke="#3c3c3c" stroke-width="1.100"/>
<path d="M211,9.500 L211,14 L215.500,14" fill="#fff" stroke="#3c3c3c" stroke-width="1"/>
<!-- open folder -->
<g>
<path d="M243.500,26.300 L243.500,11 L249,11 L250.500,13 L258,13 L258,16" fill="#d8d8de" stroke="#4a4a4a" stroke-width="1.100"/>
<path d="M243.500,26.300 L248.500,16 L262.800,16 L258,26.300Z" fill="#ececf0" stroke="#4a4a4a" stroke-width="1.100"/>
<path d="M250,9.800 Q255.500,9.200 256,14 L258.800,14 L254.800,19.500 L250.800,14 L253.500,14 Q253.500,11.500 250,9.800Z" fill="#3c9a1c" stroke="#2a7a10" stroke-width=".6"/>
</g>
<!-- save -->
<g>
<path d="M288.500,9.400 L305,9.400 Q305.800,9.400 305.800,10.200 L305.800,25.600 Q305.800,26.400 305,26.400 L290.500,26.400 L288,24 L288,10 Q288,9.400 288.500,9.400Z" fill="url(#iSave)" stroke="#1e5878" stroke-width="1"/>
<rect x="291.300" y="9.800" width="11.400" height="8.200" fill="#f2f2f2" stroke="#555" stroke-width=".6"/>
<path d="M292.500,12 h9 M292.500,14 h9 M292.500,16 h9" stroke="#8a8a8a" stroke-width=".8"/>
<rect x="293" y="20.500" width="9.500" height="5.900" fill="#2a2a2a"/>
<rect x="295.500" y="21.500" width="2.200" height="4" fill="#8ab4c8"/>
</g>
<!-- print -->
<g>
<rect x="335.500" y="9.600" width="11" height="8" fill="#f4f4f4" stroke="#666" stroke-width=".8"/>
<rect x="332.300" y="16.800" width="17.400" height="7.400" rx="1.600" fill="#3fa0cc" stroke="#1e5f86" stroke-width="1"/>
<rect x="335.200" y="20.300" width="11.600" height="1.600" fill="#0f3a58"/>
<rect x="334.300" y="23" width="13.400" height="3.600" fill="#fafafa" stroke="#555" stroke-width=".8"/>
</g>
<!-- undo / redo (disabled) -->
<g fill="#cfcfcf" stroke="#bdbdbd" stroke-width=".8">
<path d="M377.500,12 L377.500,18.500 L385,18.500 L382.500,16 Q387,14 389,18.500 Q390,22 387,24.500 L388.500,25 Q393.500,22 392.300,17 Q390,10.500 381,13.600Z"/>
<path d="M437,12 L437,18.500 L429.500,18.500 L432,16 Q427.500,14 425.500,18.500 Q424.500,22 427.500,24.500 L426,25 Q421,22 422.200,17 Q424.500,10.500 433.500,13.600Z"/>
</g>
<!-- select button -->
<rect x="458.500" y="3.500" width="43.500" height="29" fill="#fff" stroke="#9c9c9c" stroke-width="1"/>
<rect x="459" y="4" width="29.700" height="28" fill="#b4b4b4"/>
<path d="M467.500,8.500 L467.500,23.200 L471,20 L473.800,25.600 L476,24.500 L473.200,19 L478.300,18.800Z" fill="#fff" stroke="#000" stroke-width="1.100" stroke-linejoin="miter"/>
<!-- traffic light -->
<ellipse cx="517" cy="17.800" rx="5" ry="8.800" fill="#141a0c"/>
<circle cx="517" cy="13.300" r="3.300" fill="url(#iRed)"/>
<circle cx="517" cy="22" r="3.300" fill="url(#iGrn)"/>
<!-- list -->
<g>
<rect x="539.500" y="9.500" width="15" height="17" fill="#fbfbfb" stroke="#1f4e72" stroke-width="1.200"/>
<g fill="#4a9cc8" stroke="#1f4e72" stroke-width=".8"><rect x="541.500" y="11.500" width="4" height="3"/><rect x="541.500" y="16.500" width="4" height="3"/><rect x="541.500" y="21.500" width="4" height="3"/></g>
<path d="M547.500,13 h5.500 M547.500,18 h5.500 M547.500,23 h5.500" stroke="#333" stroke-width="1"/>
</g>
<!-- gear -->
<g fill="none" stroke="#2e2e2e">
<circle cx="577" cy="18" r="5.800" stroke-width="1.300"/>
<circle cx="577" cy="18" r="7.200" stroke-width="2.200" stroke-dasharray="3.100 2.560" stroke-dashoffset="1.500"/>
<circle cx="577" cy="18" r="2.500" stroke-width="1.300"/>
</g>
<circle cx="577" cy="18" r="5.100" fill="#f7f7f7"/>
<circle cx="577" cy="18" r="2.500" fill="none" stroke="#2e2e2e" stroke-width="1.300"/>
<!-- dropdown arrows -->
<g fill="#2a2a2a">
<path d="M228,16 h5.400 l-2.700,2.900Z"/><path d="M272,16 h5.400 l-2.700,2.900Z"/><path d="M316,16 h5.400 l-2.700,2.900Z"/><path d="M360,16 h5.400 l-2.700,2.900Z"/>
<path d="M492,16 h5.400 l-2.700,2.900Z"/><path d="M596,16 h5.400 l-2.700,2.900Z"/>
</g>
<g fill="#8e8e8e"><path d="M404,16 h5.400 l-2.700,2.900Z"/><path d="M447.800,16 h5.400 l-2.700,2.900Z"/></g>
<!-- right controls -->
<g fill="none" stroke="#3a3a3a" stroke-width="1.200">
<circle cx="1754.800" cy="17.800" r="8.600"/>
<circle cx="1754.800" cy="15.300" r="3.300"/>
<path d="M1748.500,23.600 Q1749.500,19.800 1754.800,19.800 Q1760.100,19.800 1761.100,23.600"/>
<circle cx="1791" cy="17.800" r="8.600"/>
</g>
<text x="1787.300" y="22.800" font-family="Liberation Sans, sans-serif" font-size="13.500" fill="#333">?</text>
<rect x="1822.500" y="21.700" width="9.500" height="1.500" fill="#222"/>
<g fill="none" stroke="#222" stroke-width="1.300"><path d="M1859.500,14.500 V11.700 H1870.300 V21 H1867.500"/><rect x="1856.700" y="14.700" width="10.600" height="9.300" fill="#f7f7f7"/></g>
<path d="M1894,13 L1903.600,22.600 M1903.600,13 L1894,22.600" stroke="#222" stroke-width="1.400"/>
<!-- MDI title icon -->
<g>
<path d="M12,52 L15.500,48.300 L20,47 L24.500,50 L24.500,59 L18.500,61.500 L12,57Z" fill="#f0c030" stroke="#3a2a08" stroke-width=".9"/>
<path d="M18.500,55 L24.500,52.500 L24.500,59 L18.500,61.500Z" fill="#f8e060"/>
<path d="M17,50.500 L20.800,48.200 L24.800,50.300 L24.800,54.500 L21,56.600 L17,54.500Z" fill="#7ac6d0" stroke="#0c3a66" stroke-width="1"/>
<path d="M17,50.500 L21,52.500 L24.800,50.300 M21,52.500 V56.600" fill="none" stroke="#0c3a66" stroke-width=".9"/>
</g>
<!-- MDI buttons glyphs -->
<g>
<rect x="1677" y="49.300" width="11.600" height="10.400" fill="#f4f4f4" stroke="#333" stroke-width="1"/>
<path d="M1682.500,52 L1679.500,54.500 L1682.500,57Z" fill="#222"/><rect x="1684" y="51.500" width="2.300" height="6" fill="#222"/>
<rect x="1711" y="49.300" width="11.600" height="10.400" fill="#f4f4f4" stroke="#333" stroke-width="1"/>
<path d="M1717.200,52 L1720.200,54.500 L1717.200,57Z" fill="#222"/><rect x="1713.300" y="51.500" width="2.300" height="6" fill="#222"/>
<rect x="1745.500" y="55.800" width="10.500" height="3.400" fill="#fff" stroke="#555" stroke-width=".8"/>
<rect x="1779.500" y="51" width="10" height="7.600" fill="#fff" stroke="#555" stroke-width=".8"/><rect x="1782" y="53.300" width="5" height="2.600" fill="none" stroke="#555" stroke-width=".8"/>
<path d="M1814.500,52.200 L1822.500,58.200 M1822.500,52.200 L1814.500,58.200" stroke="#8a2a20" stroke-width="3.4" stroke-linecap="square"/>
<path d="M1814.500,52.200 L1822.500,58.200 M1822.500,52.200 L1814.500,58.200" stroke="#fff" stroke-width="1.900" stroke-linecap="square"/>
</g>
<!-- axis triad -->
<g>
<path d="M44.500,934.500 L44.500,912" stroke="#00dd00" stroke-width="3.600"/>
<path d="M41.500,916.500 L46,908 L50.500,916.500Z" fill="#00e000"/>
<circle cx="49" cy="916" r="1" fill="#fff"/>
<path d="M46,936 L66,939.500" stroke="#dd0000" stroke-width="3.600"/>
<path d="M63.500,934.500 L73,940 L63.500,944.500Z" fill="#e00000"/>
<path d="M46,936 L33,942" stroke="#0000c8" stroke-width="4.500"/>
<path d="M32,939 L40,940.500 L38,947 L32,948Z" fill="#0000c0"/>
<circle cx="80" cy="938" r="2.500" fill="none" stroke="#b01818" stroke-width="1.200" opacity=".7"/>
<path d="M43.500,897.500 L46,901 L48.500,897.500 M46,901 V904.300" fill="none" stroke="#00cc00" stroke-width="1"/>
</g>
<!-- ===== taskbar icons ===== -->
<g fill="#fff"><path d="M16,1053.700 L22.800,1052.700 V1059.300 H16Z M23.800,1052.600 L32,1051.400 V1059.300 H23.800Z M16,1060.300 H22.800 V1066.900 L16,1065.900Z M23.800,1060.300 H32 V1068.300 L23.800,1067.100Z"/></g>
<g fill="none" stroke="#2a2a2a" stroke-width="1.400"><circle cx="71" cy="1056.500" r="5.200"/><path d="M67.300,1060.400 L61,1067.300"/></g>
<circle cx="416" cy="1059.700" r="6.700" fill="none" stroke="#fff" stroke-width="2"/>
<g fill="none" stroke="#fff" stroke-width="1.200"><rect x="458.300" y="1055.300" width="9.500" height="8.800"/><path d="M456.300,1052 H468.500 M456.300,1067.600 H468.500 M471,1052 V1054.500 M471,1057 V1067.600"/></g>
<!-- edge -->
<g>
<circle cx="514.800" cy="1059.800" r="12.400" fill="#1b86d4"/>
<path d="M503,1063 Q501,1052 510,1048.300 Q520,1045.500 525.500,1052 Q528.500,1057 525.500,1061 L517,1061 Q518.500,1056 514,1055 Q507,1055 503,1063Z" fill="#5fd08a"/>
<path d="M503,1063 Q505,1072.500 515,1072.300 Q521,1071.500 524.500,1067.500 Q516,1070 511.500,1065 Q509,1060.500 512.500,1056.500 Q506,1057 503,1063Z" fill="#1360b4"/>
<path d="M512.500,1056.500 Q509,1060.500 511.500,1065 Q516,1070 524.500,1067.500 Q527,1064.500 525.500,1061 L517,1061 Q518.500,1056 514,1055Z" fill="#1c2945"/>
</g>
<!-- explorer -->
<g>
<path d="M553,1050.500 H561 L563,1053 H575 V1070 H553Z" fill="#e0a820"/>
<rect x="553" y="1055" width="22" height="15" fill="#fbd354"/>
<path d="M557,1063 H571 V1070 H567.500 V1066.200 H560.500 V1070 H557Z" fill="#3f8ad8"/>
</g>
<!-- store -->
<g>
<path d="M608,1053 V1050 Q608,1048 610,1048 H615.500 Q617.500,1048 617.500,1050 V1053" fill="none" stroke="#f0f0f0" stroke-width="1.400"/>
<rect x="601.500" y="1053" width="22.500" height="18.500" fill="#f4f4f4"/>
<rect x="607.800" y="1058" width="4.300" height="4.300" fill="#f25022"/><rect x="613" y="1058" width="4.300" height="4.300" fill="#7fba00"/><rect x="607.800" y="1063.200" width="4.300" height="4.300" fill="#00a4ef"/><rect x="613" y="1063.200" width="4.300" height="4.300" fill="#ffb900"/>
</g>
<!-- mail -->
<g>
<path d="M649.500,1056 L661.700,1048.500 L674,1056 V1071 H649.500Z" fill="#1570c8"/>
<path d="M649.500,1056 L661.700,1064 L674,1056 V1071 H649.500Z" fill="#3aa4f0"/>
<path d="M649.500,1071 L661.700,1061.500 L674,1071Z" fill="#2b8de0"/>
<path d="M653,1056 H670.500 L661.700,1062Z" fill="#e8f4ff"/>
</g>
<!-- cmd -->
<g><rect x="699" y="1050" width="22.500" height="18.500" fill="#0c0c0c" stroke="#b8b8b8" stroke-width="1"/><rect x="699.500" y="1050.500" width="21.500" height="2.500" fill="#d8d8d8"/><path d="M702,1056 L704.500,1058 L702,1060 M706,1060.500 H712" fill="none" stroke="#e8e8e8" stroke-width="1"/></g>
<!-- hex icon -->
<g><path d="M759.700,1048.600 L769.800,1054.200 V1065.600 L759.700,1071.200 L749.600,1065.600 V1054.200Z" fill="#2a3347" stroke="#8c95a8" stroke-width="1.100"/><path d="M753.500,1064.500 L767,1055.500" stroke="#3b78d8" stroke-width="2"/><path d="M753,1063 L766.500,1054" stroke="#c8ccd4" stroke-width=".9"/></g>
<!-- window app -->
<g><rect x="798.500" y="1052" width="21" height="16" fill="#f2f2f2" stroke="#c0c0c0" stroke-width=".8"/><rect x="804.500" y="1055" width="8.500" height="10.500" fill="#2f7de0"/><path d="M800.500,1056 h2.500 M800.500,1059 h2.500 M800.500,1062 h2.500 M815,1056 h3 M815,1059 h3 M815,1062 h3" stroke="#a8a8a8" stroke-width="1"/></g>
<!-- SW 2021 -->
<g>
<path d="M847,1055 L856,1049.500 L869,1052.500 L869.500,1062 L858,1067.500 L847.500,1063Z" fill="#c8161e"/>
<path d="M847,1055 L856,1049.500 L869,1052.500 L859,1057Z" fill="#e8484c"/>
<text x="848.800" y="1065.500" font-family="Liberation Sans, sans-serif" font-size="11" font-weight="bold" fill="#fff" textLength="18.500" lengthAdjust="spacingAndGlyphs" transform="skewY(8) translate(0,-120)">SW</text>
<text x="852.300" y="1071.300" font-family="Liberation Sans, sans-serif" font-size="8" font-weight="bold" fill="#fff" textLength="17.500" lengthAdjust="spacingAndGlyphs">2021</text>
</g>
<!-- tray -->
<g fill="none" stroke="#fff" stroke-width="1.200">
<path d="M1713.300,1063 L1718.800,1057.500 L1724.300,1063"/>
<rect x="1738.300" y="1056.300" width="7.200" height="7.200" rx="1.200"/><path d="M1745.500,1058.800 L1748.500,1057 V1063 L1745.500,1061.200"/>
<path d="M1738.500,1053.800 Q1743,1050.500 1748,1053.800 M1738.500,1066.200 Q1743,1069.500 1748,1066.200" stroke-width="1"/>
<path d="M1762.500,1066.500 Q1764.500,1056.500 1774.500,1055.200 M1765.800,1067 Q1767.300,1059.600 1774.500,1058.600 M1769,1067 Q1770,1062.800 1774.500,1062.200"/>
<path d="M1783,1056.800 H1786 L1789.500,1053.300 V1066.500 L1786,1063 H1783Z"/>
<path d="M1791.500,1057.300 Q1793.300,1060 1791.500,1062.700 M1793.800,1055.300 Q1796.500,1060 1793.800,1064.700 M1796.200,1053.300 Q1799.800,1060 1796.200,1066.700"/>
</g>
<circle cx="1772.800" cy="1065.600" r="1.500" fill="#fff"/>
<path d="M1879.300,1052 H1895 V1064.500 H1886.500 L1883,1068 V1064.500 H1879.300Z" fill="#fff"/>
<path d="M1882,1055.500 H1892.500 M1882,1058.500 H1892.500 M1882,1061.500 H1889" stroke="#1c2945" stroke-width="1"/>
<circle cx="1894.400" cy="1067.500" r="7.600" fill="#1c2338" stroke="#6a7080" stroke-width="1"/>
<text x="1891.200" y="1071.600" font-family="Liberation Sans, sans-serif" font-size="11.500" fill="#fff">3</text>
<rect x="1915" y="1040" width="1" height="40" fill="#6a7488"/>
</svg>

</div>
</body>
</html>
